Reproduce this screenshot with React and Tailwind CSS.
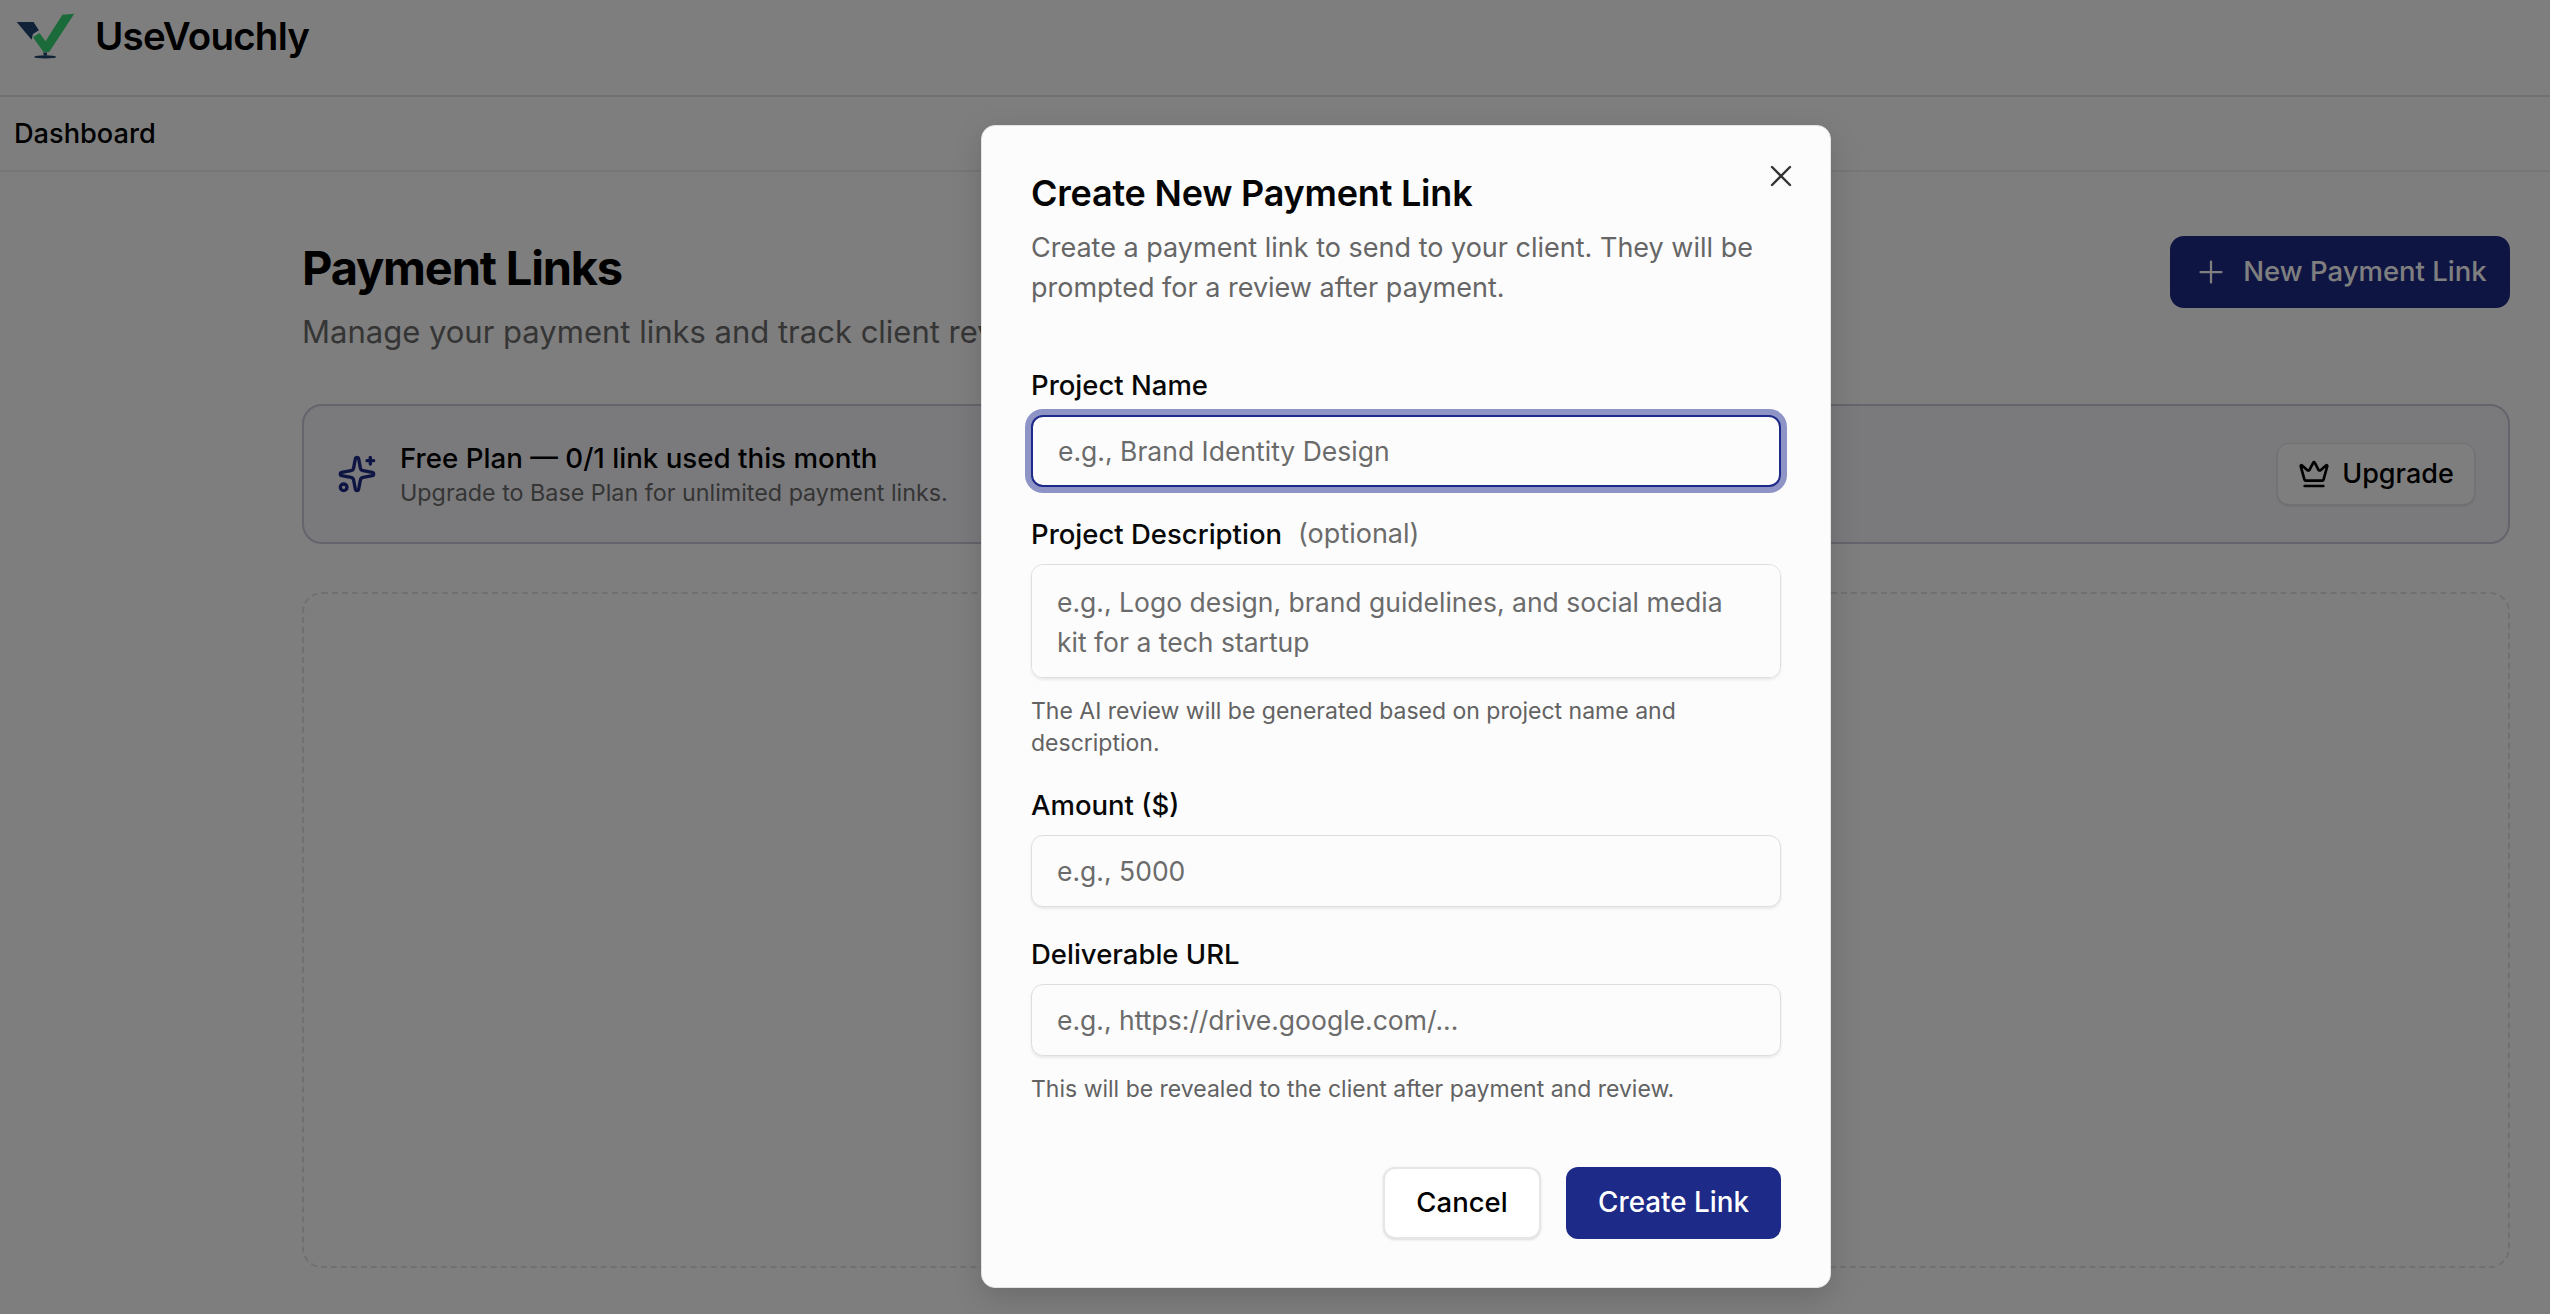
import { Crown, Plus, Sparkles, X } from 'lucide-react';

function Logo() {
  return (
    <svg viewBox="50 38 178 138" className="h-[46px] w-[59px] shrink-0">
      <path d="M52 65H103L119 90L101 101L97 118Z" fill="#1e4470" />
      <path d="M101 111L121 98L139 123L190 43L226 40L150 155H133Z" fill="#36d674" />
      <path d="M132 157H144L143 166H134Z" fill="#1e4470" />
      <ellipse cx="138" cy="170" rx="33" ry="5" fill="#1e4470" />
    </svg>
  );
}

function Field({ label, placeholder, optional, focused, multiline, help }) {
  const base =
    'w-full bg-[#fcfcfc] px-[25px] text-[26.5px] text-black outline-none placeholder:text-[#6b6b6b] rounded-[12px] border shadow-[0_2px_3px_rgba(0,0,0,0.08)]';
  return (
    <div className="flex flex-col">
      <label className="flex items-center gap-[16px] text-[27.5px] leading-[36px] font-medium text-[#080808]">
        {label}
        {optional && <span className="text-[27px] font-normal text-[#6b6b6b]">{optional}</span>}
      </label>
      {multiline ? (
        <textarea
          rows={2}
          placeholder={placeholder}
          className={`${base} mt-[12px] h-[114px] resize-none border-[#dedede] py-[17px] leading-[40px]`}
        />
      ) : (
        <input
          placeholder={placeholder}
          className={`${base} mt-[12px] h-[72px] ${
            focused
              ? 'border-2 border-[#1e2a87] ring-[6px] ring-[#8e94c6]'
              : 'border-[#dedede]'
          }`}
        />
      )}
      {help && <p className="mt-[17px] text-[23px] leading-[32px] text-[#626262]">{help}</p>}
    </div>
  );
}

export default function App() {
  return (
    <div className="relative h-[1314px] w-[2550px] overflow-hidden bg-[#fcfcfc] [font-family:Inter,sans-serif] text-black">
      {/* Page behind the dialog */}
      <header className="flex h-[97px] items-start gap-[20px] border-b-2 border-[#e2e2e2] pl-[16px] pt-[13px]">
        <Logo />
        <span className="text-[38.5px] leading-[46px] font-semibold tracking-[-0.02em]">UseVouchly</span>
      </header>
      <nav className="flex h-[75px] items-center border-b-2 border-[#ededed] pl-[14px] pt-[1px]">
        <span className="text-[27.2px] font-medium">Dashboard</span>
      </nav>
      <main className="flex flex-col pl-[302px] pr-[40px]">
        <div className="flex items-start justify-between pt-[64px]">
          <div className="pt-[4px]">
            <h1 className="text-[47px] leading-[56px] font-bold tracking-[-0.025em]">Payment Links</h1>
            <p className="mt-[16px] text-[31px] leading-[40px] text-[#6b6b6b]">
              Manage your payment links and track client reviews.
            </p>
          </div>
          <button className="flex h-[72px] w-[340px] items-center justify-center gap-[14px] rounded-[14px] bg-[#1e2a87] text-[27.5px] font-medium text-white">
            <Plus size={36} strokeWidth={1.5} />
            New Payment Link
          </button>
        </div>
        <section className="mt-[52px] flex h-[140px] items-center rounded-[20px] border-2 border-[#c8c8d8] bg-[#f5f5f9] px-[33px]">
          <Sparkles size={40} strokeWidth={2} className="shrink-0 text-[#1e2a87]" />
          <div className="ml-[23px] flex flex-col pt-[1px]">
            <span className="text-[27.7px] leading-[36px] font-medium">Free Plan — 0/1 link used this month</span>
            <span className="text-[23.3px] leading-[33px] text-[#6b6b6b]">Upgrade to Base Plan for unlimited payment links.</span>
          </div>
          <button className="ml-auto flex h-[62px] w-[198px] items-center justify-center gap-[12px] rounded-[12px] border border-[#e4e4e4] bg-[#fcfcfc] text-[27px] font-medium shadow-sm">
            <Crown size={32} strokeWidth={2} />
            Upgrade
          </button>
        </section>
        <div className="mt-[48px] h-[676px] rounded-[20px] border-2 border-dashed border-[#e0e0e0]" />
      </main>

      {/* Dim layer */}
      <div className="absolute inset-0 bg-black/50" />

      {/* Dialog */}
      <div
        role="dialog"
        aria-modal="true"
        className="absolute left-[981px] top-[125px] flex h-[1163px] w-[850px] flex-col rounded-[14px] border border-[#e4e4e4] bg-[#fcfcfc] px-[49px] pt-[43px] shadow-[0_10px_30px_rgba(0,0,0,0.15)]"
      >
        <button className="absolute right-[31px] top-[32px] text-[#333]">
          <X size={36} strokeWidth={1.6} />
        </button>
        <h2 className="text-[36px] leading-[48px] font-semibold tracking-[-0.006em] text-[#050505]">Create New Payment Link</h2>
        <p className="mt-[11px] text-[27px] leading-[40px] text-[#666]">
          Create a payment link to send to your client. They will be prompted for a review after payment.
        </p>
        <div className="mt-[59px] flex flex-col gap-[28.5px]">
          <Field label="Project Name" placeholder="e.g., Brand Identity Design" focused />
          <Field
            label="Project Description"
            optional="(optional)"
            placeholder="e.g., Logo design, brand guidelines, and social media kit for a tech startup"
            multiline
            help="The AI review will be generated based on project name and description."
          />
          <Field label="Amount ($)" placeholder="e.g., 5000" />
          <Field
            label="Deliverable URL"
            placeholder="e.g., https://drive.google.com/..."
            help="This will be revealed to the client after payment and review."
          />
        </div>
        <div className="mt-[62px] flex justify-end gap-[25px]">
          <button className="h-[72px] w-[158px] rounded-[12px] border-2 border-[#e6e6e6] bg-white text-[27.5px] font-medium text-black shadow-sm">
            Cancel
          </button>
          <button className="h-[72px] w-[215px] rounded-[12px] bg-[#1e2a87] text-[27.8px] font-medium text-white">
            Create Link
          </button>
        </div>
      </div>
    </div>
  );
}
